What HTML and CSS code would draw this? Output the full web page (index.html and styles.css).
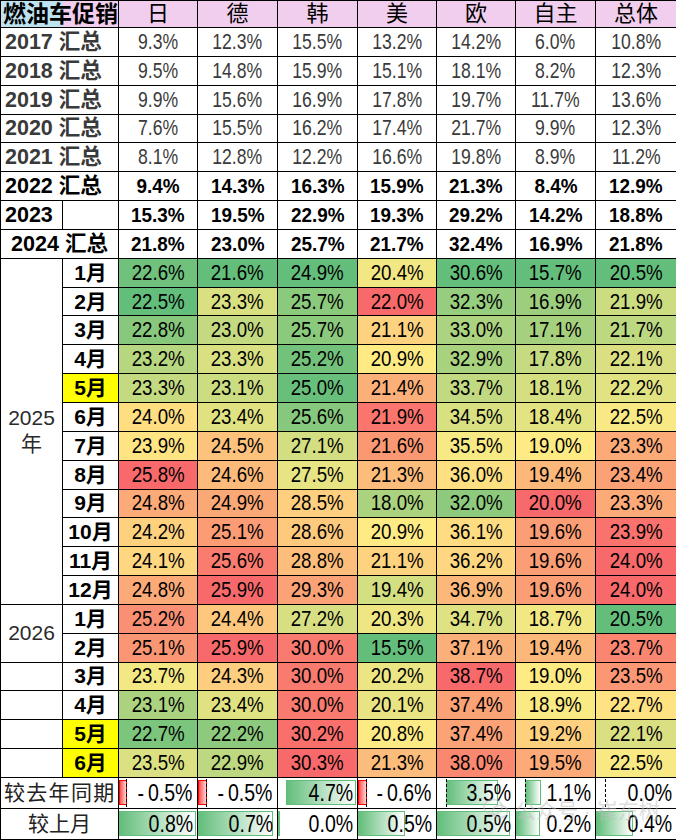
FILE: index.html
```html
<!DOCTYPE html>
<html lang="zh-CN">
<head>
<meta charset="utf-8">
<title>燃油车促销</title>
<link rel="stylesheet" href="styles.css">
</head>
<body>
<table class="promo">
  <colgroup>
    <col class="c-a"><col class="c-b">
    <col class="c-d"><col class="c-e"><col class="c-e"><col class="c-d"><col class="c-d"><col class="c-e"><col class="c-f">
  </colgroup>
  <thead>
    <tr class="head">
      <th colspan="2" class="title">燃油车促销</th>
      <th>日</th><th>德</th><th>韩</th><th>美</th><th>欧</th><th>自主</th><th>总体</th>
    </tr>
  </thead>
  <tbody>
    <tr class="yr light"><td colspan="2" class="lab">2017 汇总</td><td><span class="n">9.3%</span></td><td><span class="n">12.3%</span></td><td><span class="n">15.5%</span></td><td><span class="n">13.2%</span></td><td><span class="n">14.2%</span></td><td><span class="n">6.0%</span></td><td><span class="n">10.8%</span></td></tr>
    <tr class="yr light"><td colspan="2" class="lab">2018 汇总</td><td><span class="n">9.5%</span></td><td><span class="n">14.8%</span></td><td><span class="n">15.9%</span></td><td><span class="n">15.1%</span></td><td><span class="n">18.1%</span></td><td><span class="n">8.2%</span></td><td><span class="n">12.3%</span></td></tr>
    <tr class="yr light"><td colspan="2" class="lab">2019 汇总</td><td><span class="n">9.9%</span></td><td><span class="n">15.6%</span></td><td><span class="n">16.9%</span></td><td><span class="n">17.8%</span></td><td><span class="n">19.7%</span></td><td><span class="n">11.7%</span></td><td><span class="n">13.6%</span></td></tr>
    <tr class="yr light"><td colspan="2" class="lab">2020 汇总</td><td><span class="n">7.6%</span></td><td><span class="n">15.5%</span></td><td><span class="n">16.2%</span></td><td><span class="n">17.4%</span></td><td><span class="n">21.7%</span></td><td><span class="n">9.9%</span></td><td><span class="n">12.3%</span></td></tr>
    <tr class="yr light"><td colspan="2" class="lab">2021 汇总</td><td><span class="n">8.1%</span></td><td><span class="n">12.8%</span></td><td><span class="n">12.2%</span></td><td><span class="n">16.6%</span></td><td><span class="n">19.8%</span></td><td><span class="n">8.9%</span></td><td><span class="n">11.2%</span></td></tr>
    <tr class="yr bold"><td colspan="2" class="lab">2022 汇总</td><td><span class="n">9.4%</span></td><td><span class="n">14.3%</span></td><td><span class="n">16.3%</span></td><td><span class="n">15.9%</span></td><td><span class="n">21.3%</span></td><td><span class="n">8.4%</span></td><td><span class="n">12.9%</span></td></tr>
    <tr class="yr bold"><td class="lab">2023</td><td></td><td><span class="n">15.3%</span></td><td><span class="n">19.5%</span></td><td><span class="n">22.9%</span></td><td><span class="n">19.3%</span></td><td><span class="n">29.2%</span></td><td><span class="n">14.2%</span></td><td><span class="n">18.8%</span></td></tr>
    <tr class="yr bold"><td colspan="2" class="lab center">2024 汇总</td><td><span class="n">21.8%</span></td><td><span class="n">23.0%</span></td><td><span class="n">25.7%</span></td><td><span class="n">21.7%</span></td><td><span class="n">32.4%</span></td><td><span class="n">16.9%</span></td><td><span class="n">21.8%</span></td></tr>

    <tr class="m"><td rowspan="12" class="grp">2025<br>年</td><td class="mo">1月</td><td class="v"><span class="n">22.6%</span></td><td class="v"><span class="n">21.6%</span></td><td class="v"><span class="n">24.9%</span></td><td class="v"><span class="n">20.4%</span></td><td class="v"><span class="n">30.6%</span></td><td class="v"><span class="n">15.7%</span></td><td class="v"><span class="n">20.5%</span></td></tr>
    <tr class="m"><td class="mo">2月</td><td class="v"><span class="n">22.5%</span></td><td class="v"><span class="n">23.3%</span></td><td class="v"><span class="n">25.7%</span></td><td class="v"><span class="n">22.0%</span></td><td class="v"><span class="n">32.3%</span></td><td class="v"><span class="n">16.9%</span></td><td class="v"><span class="n">21.9%</span></td></tr>
    <tr class="m"><td class="mo">3月</td><td class="v"><span class="n">22.8%</span></td><td class="v"><span class="n">23.0%</span></td><td class="v"><span class="n">25.7%</span></td><td class="v"><span class="n">21.1%</span></td><td class="v"><span class="n">33.0%</span></td><td class="v"><span class="n">17.1%</span></td><td class="v"><span class="n">21.7%</span></td></tr>
    <tr class="m"><td class="mo">4月</td><td class="v"><span class="n">23.2%</span></td><td class="v"><span class="n">23.3%</span></td><td class="v"><span class="n">25.2%</span></td><td class="v"><span class="n">20.9%</span></td><td class="v"><span class="n">32.9%</span></td><td class="v"><span class="n">17.8%</span></td><td class="v"><span class="n">22.1%</span></td></tr>
    <tr class="m"><td class="mo hl">5月</td><td class="v"><span class="n">23.3%</span></td><td class="v"><span class="n">23.1%</span></td><td class="v"><span class="n">25.0%</span></td><td class="v"><span class="n">21.4%</span></td><td class="v"><span class="n">33.7%</span></td><td class="v"><span class="n">18.1%</span></td><td class="v"><span class="n">22.2%</span></td></tr>
    <tr class="m"><td class="mo">6月</td><td class="v"><span class="n">24.0%</span></td><td class="v"><span class="n">23.4%</span></td><td class="v"><span class="n">25.6%</span></td><td class="v"><span class="n">21.9%</span></td><td class="v"><span class="n">34.5%</span></td><td class="v"><span class="n">18.4%</span></td><td class="v"><span class="n">22.5%</span></td></tr>
    <tr class="m"><td class="mo">7月</td><td class="v"><span class="n">23.9%</span></td><td class="v"><span class="n">24.5%</span></td><td class="v"><span class="n">27.1%</span></td><td class="v"><span class="n">21.6%</span></td><td class="v"><span class="n">35.5%</span></td><td class="v"><span class="n">19.0%</span></td><td class="v"><span class="n">23.3%</span></td></tr>
    <tr class="m"><td class="mo">8月</td><td class="v"><span class="n">25.8%</span></td><td class="v"><span class="n">24.6%</span></td><td class="v"><span class="n">27.5%</span></td><td class="v"><span class="n">21.3%</span></td><td class="v"><span class="n">36.0%</span></td><td class="v"><span class="n">19.4%</span></td><td class="v"><span class="n">23.4%</span></td></tr>
    <tr class="m"><td class="mo">9月</td><td class="v"><span class="n">24.8%</span></td><td class="v"><span class="n">24.9%</span></td><td class="v"><span class="n">28.5%</span></td><td class="v"><span class="n">18.0%</span></td><td class="v"><span class="n">32.0%</span></td><td class="v"><span class="n">20.0%</span></td><td class="v"><span class="n">23.3%</span></td></tr>
    <tr class="m"><td class="mo">10月</td><td class="v"><span class="n">24.2%</span></td><td class="v"><span class="n">25.1%</span></td><td class="v"><span class="n">28.6%</span></td><td class="v"><span class="n">20.9%</span></td><td class="v"><span class="n">36.1%</span></td><td class="v"><span class="n">19.6%</span></td><td class="v"><span class="n">23.9%</span></td></tr>
    <tr class="m"><td class="mo">11月</td><td class="v"><span class="n">24.1%</span></td><td class="v"><span class="n">25.6%</span></td><td class="v"><span class="n">28.8%</span></td><td class="v"><span class="n">21.1%</span></td><td class="v"><span class="n">36.2%</span></td><td class="v"><span class="n">19.6%</span></td><td class="v"><span class="n">24.0%</span></td></tr>
    <tr class="m"><td class="mo">12月</td><td class="v"><span class="n">24.8%</span></td><td class="v"><span class="n">25.9%</span></td><td class="v"><span class="n">29.3%</span></td><td class="v"><span class="n">19.4%</span></td><td class="v"><span class="n">36.9%</span></td><td class="v"><span class="n">19.6%</span></td><td class="v"><span class="n">24.0%</span></td></tr>

    <tr class="m"><td rowspan="2" class="grp">2026</td><td class="mo">1月</td><td class="v"><span class="n">25.2%</span></td><td class="v"><span class="n">24.4%</span></td><td class="v"><span class="n">27.2%</span></td><td class="v"><span class="n">20.3%</span></td><td class="v"><span class="n">34.7%</span></td><td class="v"><span class="n">18.7%</span></td><td class="v"><span class="n">20.5%</span></td></tr>
    <tr class="m"><td class="mo">2月</td><td class="v"><span class="n">25.1%</span></td><td class="v"><span class="n">25.9%</span></td><td class="v"><span class="n">30.0%</span></td><td class="v"><span class="n">15.5%</span></td><td class="v"><span class="n">37.1%</span></td><td class="v"><span class="n">19.4%</span></td><td class="v"><span class="n">23.7%</span></td></tr>
    <tr class="m"><td></td><td class="mo">3月</td><td class="v"><span class="n">23.7%</span></td><td class="v"><span class="n">24.3%</span></td><td class="v"><span class="n">30.0%</span></td><td class="v"><span class="n">20.2%</span></td><td class="v"><span class="n">38.7%</span></td><td class="v"><span class="n">19.0%</span></td><td class="v"><span class="n">23.5%</span></td></tr>
    <tr class="m"><td></td><td class="mo">4月</td><td class="v"><span class="n">23.1%</span></td><td class="v"><span class="n">23.4%</span></td><td class="v"><span class="n">30.0%</span></td><td class="v"><span class="n">20.1%</span></td><td class="v"><span class="n">37.4%</span></td><td class="v"><span class="n">18.9%</span></td><td class="v"><span class="n">22.7%</span></td></tr>
    <tr class="m"><td></td><td class="mo hl">5月</td><td class="v"><span class="n">22.7%</span></td><td class="v"><span class="n">22.2%</span></td><td class="v"><span class="n">30.2%</span></td><td class="v"><span class="n">20.8%</span></td><td class="v"><span class="n">37.4%</span></td><td class="v"><span class="n">19.2%</span></td><td class="v"><span class="n">22.1%</span></td></tr>
    <tr class="m"><td></td><td class="mo hl">6月</td><td class="v"><span class="n">23.5%</span></td><td class="v"><span class="n">22.9%</span></td><td class="v"><span class="n">30.3%</span></td><td class="v"><span class="n">21.3%</span></td><td class="v"><span class="n">38.0%</span></td><td class="v"><span class="n">19.5%</span></td><td class="v"><span class="n">22.5%</span></td></tr>

    <tr class="cmp">
      <td colspan="2" class="clab spread">较去年同期</td>
      <td><div class="bx"><span class="bar neg" style="margin-left:0;width:8px"></span><span class="axis" style="margin-left:7px"></span><span class="val">-&#8201;0.5%</span></div></td>
      <td><div class="bx"><span class="bar neg" style="margin-left:0;width:9px"></span><span class="axis" style="margin-left:8px"></span><span class="val">-&#8201;0.5%</span></div></td>
      <td><div class="bx"><span class="bar" style="margin-left:8px;width:70px"></span><span class="val">4.7%</span></div></td>
      <td><div class="bx"><span class="bar neg" style="margin-left:0;width:9px"></span><span class="axis" style="margin-left:8px"></span><span class="val">-&#8201;0.6%</span></div></td>
      <td><div class="bx"><span class="bar" style="margin-left:9px;width:52px"></span><span class="axis" style="margin-left:9px"></span><span class="val">3.5%</span></div></td>
      <td><div class="bx"><span class="bar" style="margin-left:9px;width:16px"></span><span class="axis" style="margin-left:9px"></span><span class="val">1.1%</span></div></td>
      <td><div class="bx"><span class="axis" style="margin-left:9px"></span><span class="val">0.0%</span></div></td>
    </tr>
    <tr class="cmp">
      <td colspan="2" class="clab center">较上月</td>
      <td><div class="bx"><span class="bar" style="margin-left:0;width:77px"></span><span class="val">0.8%</span></div></td>
      <td><div class="bx"><span class="bar" style="margin-left:0;width:75px"></span><span class="val">0.7%</span></div></td>
      <td><div class="bx"><span class="bar" style="margin-left:0;width:2px"></span><span class="val">0.0%</span></div></td>
      <td><div class="bx"><span class="bar" style="margin-left:0;width:47px"></span><span class="val">0.5%</span></div></td>
      <td><div class="bx"><span class="bar" style="margin-left:0;width:73px"></span><span class="val">0.5%</span></div></td>
      <td><div class="bx"><span class="bar" style="margin-left:0;width:24px"></span><span class="val">0.2%</span></div></td>
      <td><div class="bx"><span class="bar" style="margin-left:0;width:37px"></span><span class="val">0.4%</span></div></td>
    </tr>
  </tbody>
</table>
<div class="watermark"><span class="wm-icon"><svg width="26" height="22" viewBox="0 0 26 22"><ellipse cx="10" cy="9" rx="9" ry="7.5" fill="none" stroke="currentColor" stroke-width="1.6"/><ellipse cx="17" cy="13.5" rx="7.5" ry="6.2" fill="none" stroke="currentColor" stroke-width="1.6"/></svg></span><span>公众号 · 崔东树</span></div>
<script src="script.js"></script>
</body>
</html>
```

FILE: styles.css
```css
html, body {
  margin: 0;
  padding: 0;
  background: #fff;
}
body {
  width: 676px;
  height: 840px;
  overflow: hidden;
  position: relative;
  font-family: "Liberation Sans", "Noto Sans CJK SC", sans-serif;
  color: #000;
}
.promo {
  border-collapse: collapse;
  table-layout: fixed;
  width: 676px;
  height: 840px;
}
.c-a { width: 62px; }
.c-b { width: 56px; }
.c-d { width: 79px; }
.c-e { width: 80px; }
.c-f { width: 81px; }

.promo th,
.promo td {
  border: 1px solid #000;
  padding: 0;
  line-height: 26px;
  white-space: nowrap;
  overflow: hidden;
  text-align: center;
  vertical-align: middle;
}

/* condensed numerals (the sheet uses a narrow face) */
.n {
  display: inline-block;
  transform-origin: 50% 50%;
}

/* header */
.head th {
  background: #f1ceee;
  font-size: 22px;
  font-weight: normal;
}
.head .title {
  text-align: left;
  padding-left: 2px;
  font-size: 23px;
  font-weight: bold;
  background: linear-gradient(to right, #bde3f1 0, #bde3f1 61px, #f1ceee 61px);
}

/* year rows */
.yr td { font-size: 22px; }
.yr.light td { color: #3a3a3a; }
.yr.light .n { transform: scaleX(0.8); }
.yr.bold td { font-weight: bold; font-size: 21px; }
.yr.bold .n { transform: scaleX(0.9); }
.yr .lab {
  font-family: "Liberation Sans", "Noto Sans CJK SC", sans-serif;
  font-weight: bold;
  color: #000;
  font-size: 21.5px;
  text-align: left;
  padding-left: 4px;
}
.yr.bold .lab { font-size: 21.5px; }
.yr .lab.center { text-align: center; padding-left: 0; }

/* month rows */
.grp {
  font-size: 21px;
  color: #2a2a2a;
  line-height: 27px;
}
.mo {
  font-weight: bold;
  font-size: 21px;
}
.mo.hl { background: #ffff00; }
.v { font-size: 22px; }
.v .n { transform: scaleX(0.85); }

/* comparison rows */
.clab {
  font-size: 21px;
  color: #222;
}
.clab.spread { text-align: left; padding-left: 3px; letter-spacing: 1.3px; }
.clab.center { text-align: center; }
.bx {
  display: grid;
  height: 28px;
  align-items: center;
}
.bx > span { grid-area: 1 / 1; }
.bar {
  justify-self: start;
  height: 25px;
  box-sizing: border-box;
  border: 1px solid #63be7b;
  background: linear-gradient(to right, #63be7b, #ffffff);
}
.bar.neg {
  border-color: #ff0000;
  background: linear-gradient(to right, #ff4d4d, #ffd6d6);
}
.axis {
  justify-self: start;
  align-self: stretch;
  width: 0;
  border-left: 1px dashed #000;
}
.val {
  justify-self: end;
  padding-right: 5px;
  font-size: 23px;
  transform: scaleX(0.85);
  transform-origin: 100% 50%;
}

/* watermark overlay */
.watermark {
  position: absolute;
  left: 483px;
  top: 794px;
  display: flex;
  align-items: center;
  gap: 6px;
  font-size: 21px;
  color: rgba(190, 190, 190, 0.5);
  pointer-events: none;
}
.wm-icon { display: flex; }
```

FILE: script.js
```js
(function () {
  var G = [99, 190, 123], Y = [255, 235, 132], R = [248, 105, 107];
  var cols = [];
  document.querySelectorAll('tr.m').forEach(function (row) {
    row.querySelectorAll('td.v').forEach(function (cell, i) {
      (cols[i] = cols[i] || []).push(cell);
    });
  });
  cols.forEach(function (cells) {
    var vals = cells.map(function (c) { return parseFloat(c.textContent); });
    var s = vals.slice().sort(function (a, b) { return a - b; });
    var min = s[0], max = s[s.length - 1];
    var p = (s.length - 1) * 0.5, lo = Math.floor(p);
    var mid = s[lo] + (s[Math.ceil(p)] - s[lo]) * (p - lo);
    cells.forEach(function (c, i) {
      var v = vals[i], a, b, t;
      if (v <= mid) { a = G; b = Y; t = mid > min ? (v - min) / (mid - min) : 1; }
      else { a = Y; b = R; t = max > mid ? (v - mid) / (max - mid) : 0; }
      var rgb = a.map(function (x, k) { return Math.round(x + (b[k] - x) * t); });
      c.style.backgroundColor = 'rgb(' + rgb.join(',') + ')';
    });
  });
})();
```
